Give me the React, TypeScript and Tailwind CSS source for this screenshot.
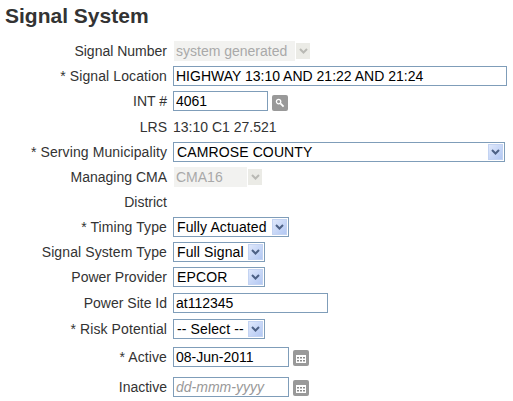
import { ReactNode } from "react"

function Arrow({ disabled }: { disabled?: boolean }) {
  return (
    <span
      className={
        disabled
          ? "flex h-[16px] w-[14px] items-center justify-center bg-[#ebebe6]"
          : "flex h-[16px] w-[15px] items-center justify-center border border-[#c3d3f2] bg-gradient-to-br from-[#dfe8fb] to-[#b3c8f3]"
      }
    >
      <svg width="9" height="6" viewBox="0 0 9 6">
        <path
          d="M1 1l3.5 3.5L8 1"
          fill="none"
          stroke={disabled ? "#b9b9b4" : "#4d6185"}
          strokeWidth="2"
        />
      </svg>
    </span>
  )
}

function Select({ value, width }: { value: string; width: string }) {
  return (
    <div className={`flex h-[20px] items-center justify-between border border-[#7f9db9] bg-white pl-[3px] pr-[1px] tracking-[0.12px] text-black ${width}`}>
      <span className="whitespace-nowrap">{value}</span>
      <Arrow />
    </div>
  )
}

function DisabledSelect({ value, width }: { value: string; width: string }) {
  return (
    <div className={`flex h-[20px] items-center justify-between pl-[1px] ${width}`}>
      <span className="flex h-[20px] flex-1 items-center bg-[#f2f2f0] pl-[2px] text-[#a9a9a9]">{value}</span>
      <span className="ml-[1px]">
        <Arrow disabled />
      </span>
    </div>
  )
}

function TextBox({ value, width, placeholder }: { value?: string; width: string; placeholder?: string }) {
  return (
    <input
      readOnly
      value={value ?? ""}
      placeholder={placeholder}
      className={`h-[20px] border border-[#7f9db9] bg-white px-[2px] text-black outline-none placeholder:text-[#999] placeholder:italic ${width}`}
    />
  )
}

function IconButton({ children, offset }: { children: ReactNode; offset: string }) {
  return (
    <span className={`ml-[4px] flex h-[16px] w-[16px] items-center justify-center rounded-[2px] bg-[#999] ${offset}`}>
      {children}
    </span>
  )
}

function SearchIcon() {
  return (
    <svg width="10" height="10" viewBox="0 0 10 10">
      <circle cx="3.6" cy="3.6" r="2.2" fill="none" stroke="#fff" strokeWidth="1.3" />
      <path d="M5.4 5.4L8.6 8.6" stroke="#fff" strokeWidth="1.8" />
    </svg>
  )
}

function CalendarIcon() {
  return (
    <svg width="10" height="10" viewBox="0 0 10 10">
      <path d="M0 2h10v8H0z" fill="#fff" />
      <path d="M1 4h2v1.5H1zM4 4h2v1.5H4zM7 4h2v1.5H7zM1 7h2v1.5H1zM4 7h2v1.5H4zM7 7h2v1.5H7z" fill="#8a8a8a" />
    </svg>
  )
}

function Row({ label, height, wide, children }: { label: string; height: string; wide?: boolean; children?: ReactNode }) {
  return (
    <div className={`flex items-center ${height}`}>
      <div className={`w-[167px] whitespace-nowrap text-right text-[#333] ${wide ? "tracking-[0.1px]" : ""}`}>{label}</div>
      <div className="ml-[6px] flex items-center">{children}</div>
    </div>
  )
}

export default function App() {
  return (
    <div className="h-[401px] w-[513px] overflow-hidden bg-white font-['Liberation_Sans',Arial,sans-serif] text-[14px] leading-none">
      <h1 className="h-[38px] pl-[5px] pt-[5px] text-[21px] font-bold leading-[22px] text-[#333]">Signal System</h1>
      <Row label="Signal Number" height="h-[26px]">
        <DisabledSelect value="system generated" width="w-[137px]" />
      </Row>
      <Row label="* Signal Location" height="h-[24px]" wide>
        <TextBox value="HIGHWAY 13:10 AND 21:22 AND 21:24" width="w-[334px]" />
      </Row>
      <Row label="INT #" height="h-[26px]">
        <TextBox value="4061" width="w-[95px]" />
        <IconButton offset="mt-[4px]">
          <SearchIcon />
        </IconButton>
      </Row>
      <Row label="LRS" height="h-[25px]">
        <span className="text-[#333]">13:10 C1 27.521</span>
      </Row>
      <Row label="* Serving Municipality" height="h-[25px]" wide>
        <Select value="CAMROSE COUNTY" width="w-[332px]" />
      </Row>
      <Row label="Managing CMA" height="h-[25px]">
        <DisabledSelect value="CMA16" width="w-[89px]" />
      </Row>
      <Row label="District" height="h-[25px]" />
      <Row label="* Timing Type" height="h-[25px]" wide>
        <Select value="Fully Actuated" width="w-[116px]" />
      </Row>
      <Row label="Signal System Type" height="h-[25px]" wide>
        <Select value="Full Signal" width="w-[92px]" />
      </Row>
      <Row label="Power Provider" height="h-[26px]">
        <Select value="EPCOR" width="w-[92px]" />
      </Row>
      <Row label="Power Site Id" height="h-[26px]">
        <TextBox value="at112345" width="w-[155px]" />
      </Row>
      <Row label="* Risk Potential" height="h-[26px]" wide>
        <Select value="-- Select --" width="w-[92px]" />
      </Row>
      <Row label="* Active" height="h-[30px]" wide>
        <TextBox value="08-Jun-2011" width="w-[116px]" />
        <IconButton offset="mt-[2px]">
          <CalendarIcon />
        </IconButton>
      </Row>
      <Row label="Inactive" height="h-[30px]">
        <TextBox placeholder="dd-mmm-yyyy" width="w-[116px]" />
        <IconButton offset="mt-[2px]">
          <CalendarIcon />
        </IconButton>
      </Row>
    </div>
  )
}
